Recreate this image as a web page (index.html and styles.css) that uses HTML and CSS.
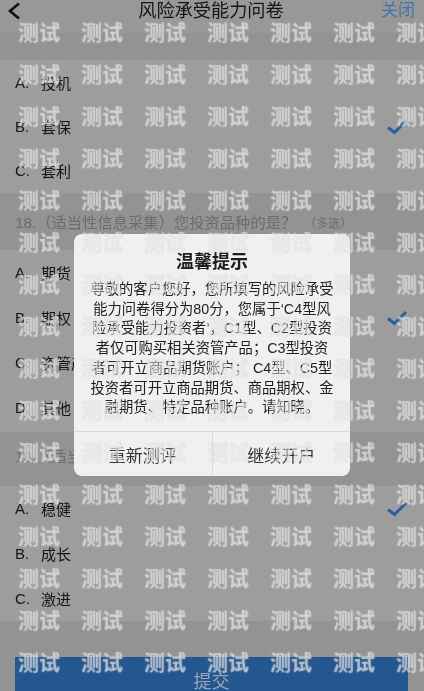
FILE: index.html
```html
<!DOCTYPE html>
<html lang="zh-CN">
<head>
<meta charset="utf-8">
<title>风险承受能力问卷</title>
<link rel="stylesheet" href="styles.css">
</head>
<body>
<div class="page">
  <header class="nav">
    <svg class="back" viewBox="0 0 14 18" width="14" height="18"><path d="M12 1.5 3 9l9 7.5" fill="none" stroke="#111" stroke-width="2.6"/></svg>
    <h1 class="nav-title">风险承受能力问卷</h1>
    <span class="nav-close">关闭</span>
  </header>
  <div class="band band-top"></div>
  <section class="group group-first">
    <div class="row"><span class="key">A.</span><span>投机</span></div>
    <div class="row"><span class="key">B.</span><span>套保</span><svg class="check" viewBox="0 0 22 16" width="22" height="16"><path d="M2 8.5 8.5 13.5 20 2" fill="none" stroke="#2d5e9e" stroke-width="3"/></svg></div>
    <div class="row"><span class="key">C.</span><span>套利</span></div>
  </section>
  <div class="band band-q"><span>18.（适当性信息采集）您投资品种的是？</span><small class="multi">（多选）</small></div>
  <section class="group group-second">
    <div class="row"><span class="key">A.</span><span>期货</span></div>
    <div class="row"><span class="key">B.</span><span>期权</span><svg class="check" viewBox="0 0 22 16" width="22" height="16"><path d="M2 8.5 8.5 13.5 20 2" fill="none" stroke="#2d5e9e" stroke-width="3"/></svg></div>
    <div class="row"><span class="key">C.</span><span>资管产品</span></div>
    <div class="row"><span class="key">D.</span><span>其他</span></div>
  </section>
  <div class="band band-q band-q2"><span>19.（适当性信息采集）</span></div>
  <section class="group">
    <div class="row"><span class="key">A.</span><span>稳健</span><svg class="check" viewBox="0 0 22 16" width="22" height="16"><path d="M2 8.5 8.5 13.5 20 2" fill="none" stroke="#2d5e9e" stroke-width="3"/></svg></div>
    <div class="row"><span class="key">B.</span><span>成长</span></div>
    <div class="row"><span class="key">C.</span><span>激进</span></div>
  </section>
  <footer class="foot"><button class="submit">提交</button></footer>

  <div class="dialog">
    <h2 class="dialog-title">温馨提示</h2>
    <p class="dialog-body">尊敬的客户您好，您所填写的风险承受<br>能力问卷得分为80分，您属于‘C4型风<br>险承受能力投资者’，C1型、C2型投资<br>者仅可购买相关资管产品；C3型投资<br>者可开立商品期货账户； C4型、C5型<br>投资者可开立商品期货、商品期权、金<br>融期货、特定品种账户。请知晓。</p>
    <div class="dialog-actions"><span class="action">重新测评</span><span class="action action-right">继续开户</span></div>
  </div>

  <div class="watermarks" aria-hidden="true">
    <span>测试</span><span>测试</span><span>测试</span><span>测试</span><span>测试</span><span>测试</span><span>测试</span>
    <span>测试</span><span>测试</span><span>测试</span><span>测试</span><span>测试</span><span>测试</span><span>测试</span>
    <span>测试</span><span>测试</span><span>测试</span><span>测试</span><span>测试</span><span>测试</span><span>测试</span>
    <span>测试</span><span>测试</span><span>测试</span><span>测试</span><span>测试</span><span>测试</span><span>测试</span>
    <span>测试</span><span>测试</span><span>测试</span><span>测试</span><span>测试</span><span>测试</span><span>测试</span>
    <span>测试</span><span>测试</span><span>测试</span><span>测试</span><span>测试</span><span>测试</span><span>测试</span>
    <span>测试</span><span>测试</span><span>测试</span><span>测试</span><span>测试</span><span>测试</span><span>测试</span>
    <span>测试</span><span>测试</span><span>测试</span><span>测试</span><span>测试</span><span>测试</span><span>测试</span>
    <span>测试</span><span>测试</span><span>测试</span><span>测试</span><span>测试</span><span>测试</span><span>测试</span>
    <span>测试</span><span>测试</span><span>测试</span><span>测试</span><span>测试</span><span>测试</span><span>测试</span>
    <span>测试</span><span>测试</span><span>测试</span><span>测试</span><span>测试</span><span>测试</span><span>测试</span>
    <span>测试</span><span>测试</span><span>测试</span><span>测试</span><span>测试</span><span>测试</span><span>测试</span>
    <span>测试</span><span>测试</span><span>测试</span><span>测试</span><span>测试</span><span>测试</span><span>测试</span>
    <span>测试</span><span>测试</span><span>测试</span><span>测试</span><span>测试</span><span>测试</span><span>测试</span>
    <span>测试</span><span>测试</span><span>测试</span><span>测试</span><span>测试</span><span>测试</span><span>测试</span>
    <span>测试</span><span>测试</span><span>测试</span><span>测试</span><span>测试</span><span>测试</span><span>测试</span>
  </div>
</div>
</body>
</html>
```
FILE: styles.css
```css
* { box-sizing: border-box; }
html, body { margin: 0; padding: 0; }
body { width: 424px; height: 691px; overflow: hidden; background: #939393; }
.page {
  position: relative;
  width: 424px;
  height: 691px;
  overflow: hidden;
  display: flex;
  flex-direction: column;
  font-family: "Liberation Sans", "Noto Sans CJK SC", sans-serif;
  color: #111;
  filter: blur(0.45px);
}
.nav {
  height: 33px;
  flex: none;
  display: grid;
  grid-template-columns: 1fr auto 1fr;
  align-items: center;
  padding: 0 9px 11px 7px;
  background: #989898;
}
.back { display: block; }
.nav-title { margin: 0; font-size: 18.2px; font-weight: 400; line-height: 22px; color: #161616; }
.nav-close { justify-self: end; font-size: 17px; line-height: 22px; color: #4374ad; }
.band { flex: none; background: #939393; }
.band-top { height: 27px; }
.band-q {
  height: 57px;
  padding: 19px 0 0 15px;
  font-size: 15.3px;
  line-height: 22px;
  color: #6c6c6c;
  white-space: nowrap;
}
.band-q2 { height: 54px; padding-top: 14px; }
.multi { font-size: 12px; margin-left: 8px; }
.group { flex: none; background: #9d9d9d; }
.group-first .row { height: 44.4px; }
.group-second { padding-bottom: 2px; }
.row {
  height: 45px;
  display: flex;
  align-items: center;
  padding: 0 16px 0 15px;
  font-size: 15px;
  color: #141414;
}
.key { width: 26px; flex: none; }
.check { margin-left: auto; }
.foot {
  flex: 1;
  background: #939393;
  padding: 36px 16px 0 15px;
}
.submit {
  display: block;
  width: 100%;
  height: 40px;
  padding: 6px 0 0;
  border: 0;
  background: #24568f;
  color: #9aa6b6;
  font: 18px "Liberation Sans", "Noto Sans CJK SC", sans-serif;
  text-align: center;
}
.dialog {
  position: absolute;
  left: 74px;
  top: 234px;
  width: 276px;
  height: 242px;
  display: flex;
  flex-direction: column;
  background: #f0f0f0;
  border-radius: 8px;
  text-align: center;
  color: #1d1d1d;
}
.dialog-title { margin: 14px 0 0; font-size: 18px; font-weight: 700; line-height: 28px; }
.dialog-body { margin: 4px 0 0; font-size: 14.3px; line-height: 19.7px; white-space: nowrap; }
.dialog-actions {
  margin-top: auto;
  height: 45px;
  display: flex;
  border-top: 1px solid #d8d8d8;
  font-size: 17px;
  color: #333;
}
.action { flex: 1; display: flex; align-items: center; justify-content: center; }
.action-right { border-left: 1px solid #d8d8d8; }
.watermarks {
  position: absolute;
  left: 18px;
  top: 22px;
  display: grid;
  grid-template-columns: repeat(7, 63px);
  grid-auto-rows: 42px;
  font-size: 21px;
  font-weight: 700;
  line-height: 22px;
  color: rgba(255, 255, 255, 0.42);
  text-shadow: 0 0 2px rgba(255, 255, 255, 0.4), 0 0 1px rgba(90, 90, 90, 0.3);
  white-space: nowrap;
  pointer-events: none;
  filter: blur(0.7px);
}
```
